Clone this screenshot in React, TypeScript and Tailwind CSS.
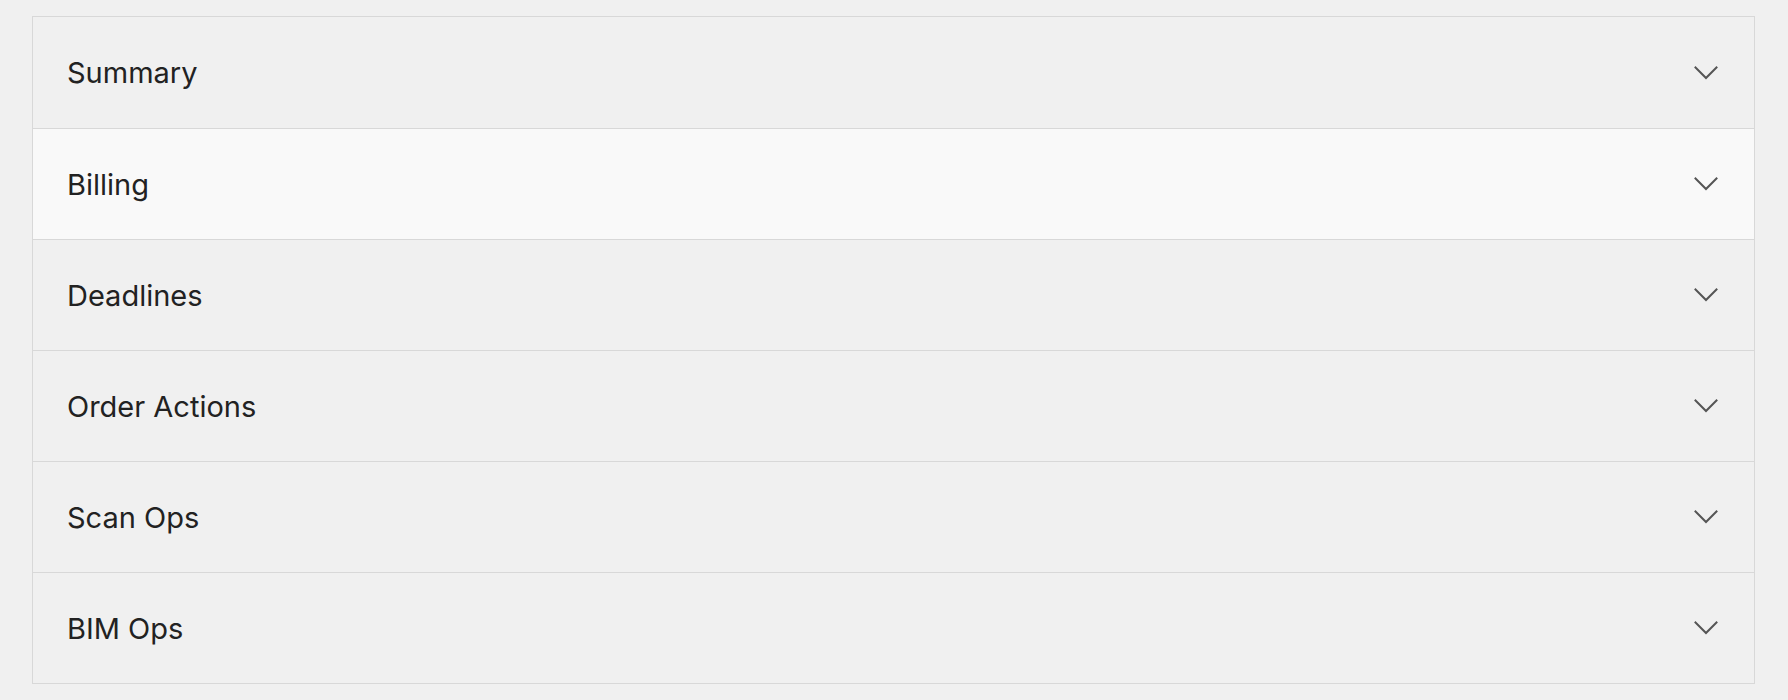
const sections = [
  { title: 'Summary' },
  { title: 'Billing', hovered: true },
  { title: 'Deadlines' },
  { title: 'Order Actions' },
  { title: 'Scan Ops' },
  { title: 'BIM Ops' },
];

const Chevron = () => (
  <svg width="24" height="14" viewBox="0 0 24 14" fill="none" className="shrink-0">
    <path d="M1.5 1.5 12 12 22.5 1.5" stroke="#555555" strokeWidth="2" strokeLinecap="square" />
  </svg>
);

export default function App() {
  return (
    <div className="min-h-screen bg-[#f0f0f0] pl-[32px] pr-[33px] pt-[16px]" style={{ fontFamily: 'Inter, "Liberation Sans", sans-serif' }}>
      <div className="border border-[#d8d8d8] bg-[#f0f0f0]">
        {sections.map((s, i) => (
          <button
            key={s.title}
            type="button"
            className={`flex w-full h-[111px] items-center justify-between pl-[34px] pr-[36px] text-left ${
              i > 0 ? 'border-t border-[#d8d8d8]' : ''
            } ${s.hovered ? 'bg-[#f9f9f9]' : 'bg-[#f0f0f0]'}`}
          >
            <span className="text-[29px] font-normal leading-none text-[#222222]">{s.title}</span>
            <Chevron />
          </button>
        ))}
      </div>
    </div>
  );
}
